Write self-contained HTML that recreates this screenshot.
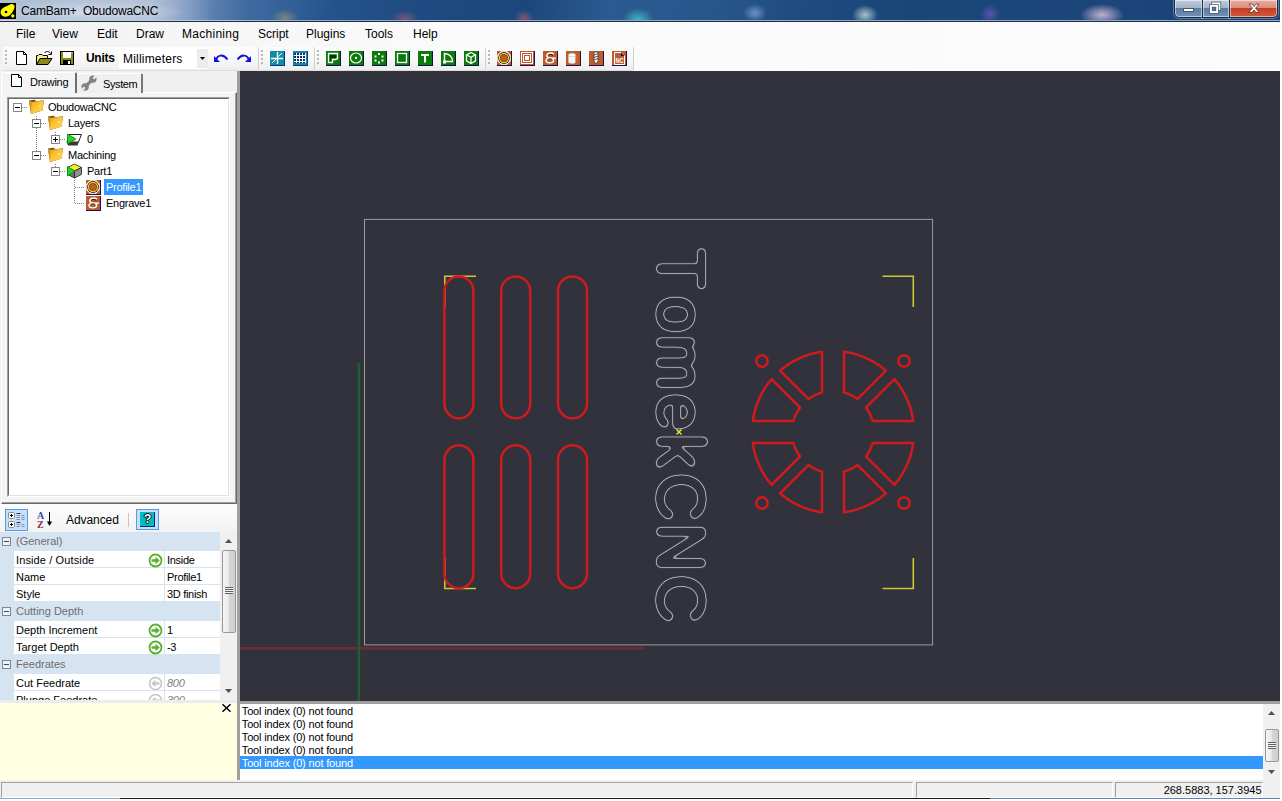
<!DOCTYPE html>
<html>
<head>
<meta charset="utf-8">
<title>CamBam+ ObudowaCNC</title>
<style>
html,body{margin:0;padding:0;background:#fff;}
body{width:1282px;height:801px;overflow:hidden;position:relative;font-family:"Liberation Sans",sans-serif;font-size:12px;color:#000;}
.abs{position:absolute;}
svg{position:absolute;overflow:visible;}
#win{position:absolute;left:0;top:0;width:1280px;height:799px;background:#f0f0f0;overflow:hidden;}
/* title bar */
#title{position:absolute;left:0;top:0;width:1280px;height:22px;overflow:hidden;
background:
 radial-gradient(ellipse 95px 12px at 92px 12px,rgba(212,221,234,.9),rgba(200,211,228,.5) 60%,rgba(190,203,222,0) 100%),
 linear-gradient(90deg,rgba(178,192,213,.95) 0,rgba(184,198,218,.95) 150px,rgba(160,180,210,.7) 185px,rgba(120,150,195,.3) 215px,rgba(100,135,185,0) 245px),
 radial-gradient(ellipse 14px 9px at 285px 18px,rgba(150,150,110,.7),rgba(150,150,110,0)),
 radial-gradient(ellipse 14px 9px at 405px 19px,rgba(160,90,110,.7),rgba(160,90,110,0)),
 radial-gradient(ellipse 10px 8px at 524px 18px,rgba(170,90,110,.7),rgba(170,90,110,0)),
 radial-gradient(ellipse 16px 12px at 638px 20px,rgba(70,190,200,.9),rgba(70,190,200,0)),
 radial-gradient(ellipse 12px 9px at 755px 13px,rgba(130,160,220,.8),rgba(130,160,220,0)),
 radial-gradient(ellipse 13px 10px at 865px 15px,rgba(185,212,212,.85),rgba(170,200,200,.5) 50%,rgba(170,200,200,0)),
 radial-gradient(ellipse 10px 10px at 990px 14px,rgba(100,85,180,.85),rgba(90,80,170,0)),
 radial-gradient(ellipse 22px 11px at 1102px 15px,rgba(205,190,215,.9),rgba(190,170,205,.55) 50%,rgba(190,170,200,0)),
 linear-gradient(100deg,#7d9bbf 0px,#5d83b0 150px,#3a679d 260px,#24538b 330px,#1d4a80 420px,#1c477b 520px,#2a5a90 600px,#28578c 700px,#1e4a7e 800px,#1a4577 900px,#1b4679 1000px,#1c457a 1100px,#1b4376 1200px,#1d4679 1276px,#4f7aac 1278px,#5b86b6 1280px);}
#title:after{content:"";position:absolute;left:0;right:0;top:20px;height:1px;background:linear-gradient(90deg,#ccd6e4 0,#b9c8dc 200px,#8fa9c8 300px,#8fa9c8 100%);}
#title:before{content:"";position:absolute;left:0;right:0;top:21px;height:1px;background:#222e44;z-index:2;}
#title .ttext{position:absolute;left:21px;top:4px;font-size:12px;white-space:pre;color:#000;letter-spacing:-0.2px;}
.cap{position:absolute;top:0;height:18px;box-sizing:border-box;border:1px solid #1c2c48;border-top:none;box-shadow:inset 0 0 0 1px rgba(255,255,255,.5),0 0 0 1px rgba(190,208,230,.4);}
#menubar{position:absolute;left:0;top:22px;width:1280px;height:24px;background:linear-gradient(90deg,#f1f1f1 0,#f6f6f6 200px,#fafafa 450px,#fcfcfc 100%);}
#menubar span{position:absolute;top:5px;font-size:12px;white-space:pre;}
#toolbar{position:absolute;left:0;top:46px;width:1280px;height:25px;background:linear-gradient(90deg,#f1f1f1 0,#f6f6f6 200px,#fafafa 450px,#fcfcfc 100%);}
.strip{position:absolute;top:1px;height:24px;background:linear-gradient(180deg,#fcfcfc,#f8f8f8 50%,#eeeeee);border-radius:2px 2px 2px 2px;border-right:1px solid #d0d0d0;border-bottom:1px solid #dcdcdc;box-sizing:border-box;}
.grip{position:absolute;top:4px;width:2px;height:14px;background:repeating-linear-gradient(180deg,#b8b8b8 0,#b8b8b8 2px,transparent 2px,transparent 4px);}
.gi{position:absolute;top:5px;width:15px;height:15px;box-sizing:border-box;border-right:1px solid #101050;border-bottom:1px solid #101050;background:#0a7a0a;}
.bi{position:absolute;top:5px;width:15px;height:15px;box-sizing:border-box;border-right:1px solid #201050;border-bottom:1px solid #201050;background:#bc5c2e;}
.gi svg,.bi svg{left:0;top:0;}
#canvas{position:absolute;left:240px;top:71px;width:1040px;height:630px;background:#32323c;}

.f11{font-size:11px;white-space:pre;}
.f12{font-size:12px;}
.tl{position:absolute;font-size:11px;white-space:pre;line-height:14px;letter-spacing:-0.25px;}
.dh{position:absolute;height:1px;background:repeating-linear-gradient(90deg,#808080 0,#808080 1px,transparent 1px,transparent 2px);}
.dv{position:absolute;width:1px;background:repeating-linear-gradient(180deg,#808080 0,#808080 1px,transparent 1px,transparent 2px);}
.ex{position:absolute;width:9px;height:9px;box-sizing:border-box;border:1px solid #848484;background:#fff;}
.ex i{position:absolute;left:1px;top:3px;width:5px;height:1px;background:#000;}
.ex b{position:absolute;left:3px;top:1px;width:1px;height:5px;background:#000;}
.ex.g{background:#eef3fa;border-color:#7b8794;}
.ex.g i{background:#404850;}
.cat{position:absolute;left:16px;width:204px;height:19px;line-height:18px;font-size:11px;color:#6d6d6d;white-space:pre;letter-spacing:0;}
.row{position:absolute;left:14px;width:206px;height:16px;background:#fff;font-size:11px;line-height:16px;white-space:pre;}
.row .l{position:absolute;left:2px;top:1px;}
.row .v{position:absolute;left:150px;top:0;width:56px;height:16px;line-height:18px;border-left:1px solid #d6e4f2;padding-left:2px;box-sizing:border-box;letter-spacing:-0.3px;}
.row .v.d{color:#808080;font-style:italic;}
.lg{position:absolute;left:241.8px;font-size:11px;line-height:14px;height:13px;white-space:pre;letter-spacing:-0.16px;}
.sp{position:absolute;top:782px;height:16px;box-sizing:border-box;border:1px solid;border-color:#a0a0a0 #fff #fff #a0a0a0;}
</style>
</head>
<body>
<div id="win">
  <div id="title">
    <svg style="left:0;top:3px" width="17" height="17" viewBox="0 0 17 17"><rect width="16" height="16" fill="#000"/><path d="M0.600 9.500 C0.500 6.500 3.500 4.300 6 3.600 L10.500 1.300 C12.500 0.500 14.800 1.600 14.600 4 C14.400 6.500 12.500 9 11 11 C9.500 13 6.500 14.300 4 13.600 C2 13 0.700 11.500 0.600 9.500 Z" fill="#fafa00"/><circle cx="6" cy="9" r="1.350" fill="#000"/><path d="M12.800 10.800 L14.900 12.900 L12.800 15 L10.700 12.900 Z" fill="#fafa00"/></svg>
    <div class="ttext">CamBam+  ObudowaCNC</div>
    <div class="cap" style="left:1174px;width:29px;border-radius:0 0 0 5px;background:linear-gradient(180deg,#c0ccdc 0,#a2b5cc 46%,#5c7ca4 50%,#7090b8 100%);"></div>
    <div class="cap" style="left:1202px;width:28px;background:linear-gradient(180deg,#c0ccdc 0,#a2b5cc 46%,#5c7ca4 50%,#7090b8 100%);"></div>
    <div class="cap" style="left:1229px;width:49px;border-radius:0 0 5px 0;background:linear-gradient(180deg,#e9aea2 0,#dd8c7c 45%,#c63f25 50%,#cf5a3a 100%);"></div>
    <svg style="left:1174px;top:0" width="104" height="18" viewBox="0 0 104 18">
      <rect x="9.5" y="8.5" width="10" height="3" fill="#fff" stroke="#4a5668" stroke-width="1"/>
      <rect x="39" y="3.300" width="6.500" height="6" fill="none" stroke="#fff" stroke-width="2"/><rect x="37.700" y="2" width="9.100" height="8.600" fill="none" stroke="#4a5668" stroke-width="0.7"/>
      <rect x="36.800" y="5.700" width="6.500" height="6.400" fill="#6d87a8" stroke="#fff" stroke-width="2.100"/><rect x="35.500" y="4.400" width="9.100" height="9" fill="none" stroke="#4a5668" stroke-width="0.7"/><rect x="38.400" y="7.300" width="3.300" height="3.200" fill="#5b7596" stroke="#4a5668" stroke-width=".6"/>
      <path d="M75 4 L78 4 L80 6.500 L82 4 L85 4 L81.600 8.200 L85.200 12.500 L82 12.500 L80 10 L78 12.500 L74.800 12.500 L78.400 8.200 Z" fill="#fff" stroke="#5a3030" stroke-width=".8" stroke-linejoin="round"/>
    </svg>
  </div>
  <div id="menubar">
    <span style="left:16px">File</span>
    <span style="left:52px">View</span>
    <span style="left:97px">Edit</span>
    <span style="left:136px">Draw</span>
    <span style="left:182px;letter-spacing:0.28px">Machining</span>
    <span style="left:258px">Script</span>
    <span style="left:306px">Plugins</span>
    <span style="left:365px">Tools</span>
    <span style="left:413px">Help</span>
  </div>
  <div id="toolbar">
    <div class="strip" style="left:3px;width:256px;"></div>
    <div class="strip" style="left:259px;width:56px;"></div>
    <div class="strip" style="left:315px;width:171px;"></div>
    <div class="strip" style="left:486px;width:148px;"></div>
    <div class="grip" style="left:5px"></div>
    <div class="grip" style="left:261px"></div>
    <div class="grip" style="left:317px"></div>
    <div class="grip" style="left:488px"></div>
    <!-- new / open / save -->
    <svg style="left:16px;top:5px" width="12" height="14" viewBox="0 0 12 14"><path d="M0.500 0.500 H7.500 L10.500 3.500 V13.500 H0.500 Z" fill="#fff" stroke="#000"/><path d="M7.500 0.500 V3.500 H10.500" fill="none" stroke="#000"/></svg>
    <svg style="left:36px;top:4px" width="17" height="16" viewBox="0 0 17 16"><path d="M0.500 14.500 V5.500 H2 L3 4.500 H6 L7 5.500 H11.500 V8.500" fill="#f2ee7a" stroke="#000"/><path d="M0.500 14.500 L4 8.500 H16 L12 14.500 Z" fill="#8a8a18" stroke="#000"/><path d="M8.500 3 C10 1 13 1 14.500 3.500" fill="none" stroke="#000"/><path d="M15.500 1.500 V4.500 H12.500" fill="none" stroke="#000"/></svg>
    <svg style="left:60px;top:5px" width="15" height="15" viewBox="0 0 15 15"><rect x="0.500" y="0.500" width="13" height="13" fill="#8a8a18" stroke="#000"/><rect x="3" y="1" width="8" height="6" fill="#fff"/><rect x="3" y="9" width="8" height="4.500" fill="#000"/><rect x="8" y="10" width="2" height="3" fill="#fff"/><rect x="11.500" y="1.500" width="1" height="1" fill="#fff"/></svg>
    <div class="abs" style="left:86px;top:5px;font-weight:bold;font-size:12px;letter-spacing:-0.3px;">Units</div>
    <div class="abs" style="left:119px;top:2px;width:89px;height:21px;background:#fff;"></div>
    <div class="abs" style="left:197px;top:3px;width:11px;height:19px;background:#ececec;"></div>
    <div class="abs" style="left:123px;top:6px;font-size:12px;letter-spacing:0.2px;">Millimeters</div>
    <svg style="left:200px;top:11px" width="5" height="3" viewBox="0 0 5 3"><path d="M0 0 H5 L2.500 3 Z" fill="#000"/></svg>
    <!-- undo / redo -->
    <svg style="left:213px;top:6px" width="16" height="12" viewBox="0 0 16 12"><path d="M3 8 C4.500 3 10 1.500 14.500 7.500" fill="none" stroke="#1414d8" stroke-width="2"/><path d="M1 4 V10 H7 Z" fill="#1414d8"/></svg>
    <svg style="left:236px;top:6px" width="16" height="12" viewBox="0 0 16 12"><path d="M13 8 C11.500 3 6 1.500 1.500 7.500" fill="none" stroke="#1414d8" stroke-width="2"/><path d="M15 4 V10 H9 Z" fill="#1414d8"/></svg>
    <!-- view icons -->
    <div class="gi" style="left:270px;background:#108ca6;border-color:#0c3a8a;"><svg width="14" height="14" viewBox="0 0 14 14"><path d="M7.500 1 V13 M1 7.500 H13" stroke="#fff" stroke-width="1.400"/><path d="M2 12 L6 8 M8.500 5.500 L12 2" stroke="#fff" stroke-width="1"/></svg></div>
    <div class="gi" style="left:293px;background:#108ca6;border-color:#0c3a8a;"><svg width="14" height="14" viewBox="0 0 14 14"><rect x="1" y="2" width="12" height="10" fill="#08306e"/><path d="M1 4.500 H13 M1 7.500 H13 M1 10.500 H13 M3.500 2 V12 M6.500 2 V12 M9.500 2 V12 M12.500 2 V12" stroke="#fff" stroke-width="1"/></svg></div>
    <!-- green draw icons -->
    <div class="gi" style="left:326px"><svg width="14" height="14" viewBox="0 0 14 14"><path d="M2.500 2.500 H11.500 V7.500 L9.500 8.500 H6.500 V11.500 H2.500 Z" fill="none" stroke="#fff" stroke-width="1.300"/><path d="M4 4 H10 V7 H5 V10 H4 Z" fill="#000" opacity=".55"/></svg></div>
    <div class="gi" style="left:349px"><svg width="14" height="14" viewBox="0 0 14 14"><ellipse cx="7" cy="7" rx="5.500" ry="5" fill="none" stroke="#fff" stroke-width="1.200"/><circle cx="7" cy="7" r="1.200" fill="#fff"/></svg></div>
    <div class="gi" style="left:372px"><svg width="14" height="14" viewBox="0 0 14 14"><g fill="#fff"><rect x="6" y="2" width="2" height="2"/><rect x="2.500" y="4.500" width="2" height="2"/><rect x="9.500" y="4.500" width="2" height="2"/><rect x="2.500" y="8.500" width="2" height="2"/><rect x="9.500" y="8.500" width="2" height="2"/><rect x="6" y="10.500" width="2" height="2"/></g></svg></div>
    <div class="gi" style="left:395px"><svg width="14" height="14" viewBox="0 0 14 14"><rect x="2.500" y="2.500" width="9" height="9" fill="none" stroke="#fff" stroke-width="1.300"/></svg></div>
    <div class="gi" style="left:418px"><svg width="14" height="14" viewBox="0 0 14 14"><path d="M3 3 H11 V5 H8 V11.500 H6 V5 H3 Z" fill="#fff"/></svg></div>
    <div class="gi" style="left:441px"><svg width="14" height="14" viewBox="0 0 14 14"><path d="M3.500 10.500 V2.500 C8 2.500 11.500 6 11.500 10.500 Z" fill="none" stroke="#fff" stroke-width="1.400"/><rect x="2" y="9.500" width="3" height="3" fill="#fff"/></svg></div>
    <div class="gi" style="left:464px"><svg width="14" height="14" viewBox="0 0 14 14"><path d="M7 1.500 L11.500 3.800 V9.800 L7 12.500 L2.500 9.800 V3.800 Z M2.500 3.800 L7 6.300 L11.500 3.800 M7 6.300 V12.500" fill="none" stroke="#fff" stroke-width="1.300"/></svg></div>
    <!-- brown machining icons -->
    <div class="bi" style="left:497px"><svg width="14" height="14" viewBox="0 0 14 14"><path d="M4 0.300 H10 L13.700 4 V10 L10 13.700 H4 L0.300 10 V4 Z" fill="#fff"/><circle cx="7" cy="7" r="5.900" fill="#181008"/><circle cx="7" cy="7" r="4.500" fill="#bc5c2e" stroke="#f8d810" stroke-width="1.400"/><circle cx="7" cy="7" r="3.700" fill="none" stroke="#302008" stroke-width=".5"/></svg></div>
    <div class="bi" style="left:520px"><svg width="14" height="14" viewBox="0 0 14 14"><rect x="1" y="1" width="12" height="12" fill="#fff"/><rect x="2.500" y="2.500" width="9" height="9" fill="none" stroke="#bc5c2e" stroke-width="1"/><rect x="4.500" y="4.500" width="5" height="5" fill="none" stroke="#bc5c2e" stroke-width="1"/><rect x="6" y="6" width="2" height="2" fill="#fff"/></svg></div>
    <div class="bi" style="left:543px"><svg width="14" height="14" viewBox="0 0 14 14"><path d="M10.800 3.200 C9.500 1.800 5.500 1.600 4.200 3.400 C3 5.200 4.500 6.800 7 7.200 H12.800" fill="none" stroke="#fff" stroke-width="1.500"/><path d="M10.200 4.300 C9 3.300 6.300 3.200 5.500 4.300" fill="none" stroke="#000" stroke-width=".8"/><ellipse cx="6.800" cy="9.600" rx="3.800" ry="2.300" fill="none" stroke="#fff" stroke-width="1.400"/><path d="M4.500 8.400 C5.500 7.700 8 7.700 9.200 8.400" fill="none" stroke="#000" stroke-width=".8"/></svg></div>
    <div class="bi" style="left:566px"><svg width="14" height="14" viewBox="0 0 14 14"><path d="M2.500 4 V11 C2.500 13 9.500 13 9.500 11 V4" fill="#f4f4f4" stroke="#c8c8c8" stroke-width=".6"/><ellipse cx="6" cy="4" rx="3.500" ry="1.800" fill="#fff" stroke="#c0c0c0" stroke-width=".6"/><path d="M9.500 5 V11.500 L12 10 V4 Z" fill="#e06030" opacity=".7"/></svg></div>
    <div class="bi" style="left:589px"><svg width="14" height="14" viewBox="0 0 14 14"><path d="M5 1 H9 V10 L7 13 L5 10 Z" fill="#fff" stroke="#303030" stroke-width=".7"/><path d="M5 4 L9 2.500 M5 6.500 L9 5 M5 9 L9 7.500" stroke="#303030" stroke-width=".8"/></svg></div>
    <div class="bi" style="left:612px"><svg width="14" height="14" viewBox="0 0 14 14"><path d="M2.500 1.500 H9 L12.500 5 V13.500 H2.500 Z" fill="none" stroke="#fff" stroke-width="1"/><path d="M9 1.500 L12.500 5 H9 Z" fill="#201040"/><text x="3.600" y="11.500" font-family="Liberation Sans,sans-serif" font-size="6.500" font-weight="bold" fill="#fff" textLength="8" lengthAdjust="spacingAndGlyphs">NC</text></svg></div>
  </div>
  <div id="canvas"></div>
<svg width="0" height="0" style="left:0;top:0"><linearGradient id="fg" x1="0" y1="0" x2="1" y2="1"><stop offset="0" stop-color="#f0a414"/><stop offset=".55" stop-color="#fcc83a"/><stop offset="1" stop-color="#ffd658"/></linearGradient></svg>
  <svg id="cv" style="left:0;top:0" width="1280" height="701" viewBox="0 0 1280 701">
    <g fill="none" stroke="#9c9ca8" stroke-width="1">
      <rect x="364.500" y="219.400" width="568.100" height="425.500"/>
    </g>
    <path d="M240 648.200 H643.800" stroke="#702c36" stroke-width="2.600" fill="none"/>
    <path d="M358.900 363 V701" stroke="#1f602b" stroke-width="2.400" fill="none"/>
    <g fill="none" stroke="#c8c834" stroke-width="1.600">
      <path d="M476 276.200 H444.800 V307"/>
      <path d="M882.500 276.200 H913.300 V307"/>
      <path d="M476 588.500 H444.800 V558"/>
      <path d="M882.500 588.500 H913.300 V558"/>
    </g>
    <g fill="none" stroke="#d01a1e" stroke-width="2.500" stroke-linejoin="round">
      <rect x="444.4" y="276.4" width="29" height="141.9" rx="14.5" ry="14.5"/><rect x="444.4" y="445.3" width="29" height="142.9" rx="14.5" ry="14.5"/><rect x="501.2" y="276.4" width="29" height="141.9" rx="14.5" ry="14.5"/><rect x="501.2" y="445.3" width="29" height="142.9" rx="14.5" ry="14.5"/><rect x="558.0" y="276.4" width="29" height="141.9" rx="14.5" ry="14.5"/><rect x="558.0" y="445.3" width="29" height="142.9" rx="14.5" ry="14.5"/>
      <path d="M844.0 351.8 L847.3 352.3 L850.5 352.9 L853.8 353.7 L857.0 354.6 L860.1 355.7 L863.2 356.9 L866.3 358.2 L869.3 359.6 L872.3 361.1 L875.1 362.8 L877.9 364.6 L880.7 366.5 L883.3 368.5 L885.9 370.6 L857.4 399.1 L856.6 398.4 L855.7 397.8 L854.8 397.3 L853.9 396.7 L852.9 396.2 L852.0 395.7 L851.0 395.2 L850.0 394.7 L849.1 394.3 L848.1 393.9 L847.1 393.5 L846.1 393.1 L845.0 392.8 L844.0 392.5 Z"/>
<path d="M913.2 421.0 L912.7 417.7 L912.1 414.5 L911.3 411.2 L910.4 408.0 L909.3 404.9 L908.1 401.8 L906.8 398.7 L905.4 395.7 L903.9 392.7 L902.2 389.9 L900.4 387.1 L898.5 384.3 L896.5 381.7 L894.4 379.1 L865.9 407.6 L866.6 408.4 L867.2 409.3 L867.7 410.2 L868.3 411.1 L868.8 412.1 L869.3 413.0 L869.8 414.0 L870.3 415.0 L870.7 415.9 L871.1 416.9 L871.5 417.9 L871.9 418.9 L872.2 420.0 L872.5 421.0 Z"/>
<path d="M844.0 512.2 L847.3 511.7 L850.5 511.1 L853.8 510.3 L857.0 509.4 L860.1 508.3 L863.2 507.1 L866.3 505.8 L869.3 504.4 L872.3 502.9 L875.1 501.2 L877.9 499.4 L880.7 497.5 L883.3 495.5 L885.9 493.4 L857.4 464.9 L856.6 465.6 L855.7 466.2 L854.8 466.7 L853.9 467.3 L852.9 467.8 L852.0 468.3 L851.0 468.8 L850.0 469.3 L849.1 469.7 L848.1 470.1 L847.1 470.5 L846.1 470.9 L845.0 471.2 L844.0 471.5 Z"/>
<path d="M913.2 443.0 L912.7 446.3 L912.1 449.5 L911.3 452.8 L910.4 456.0 L909.3 459.1 L908.1 462.2 L906.8 465.3 L905.4 468.3 L903.9 471.3 L902.2 474.1 L900.4 476.9 L898.5 479.7 L896.5 482.3 L894.4 484.9 L865.9 456.4 L866.6 455.6 L867.2 454.7 L867.7 453.8 L868.3 452.9 L868.8 451.9 L869.3 451.0 L869.8 450.0 L870.3 449.0 L870.7 448.1 L871.1 447.1 L871.5 446.1 L871.9 445.1 L872.2 444.0 L872.5 443.0 Z"/>
<path d="M822.0 351.8 L818.7 352.3 L815.5 352.9 L812.2 353.7 L809.0 354.6 L805.9 355.7 L802.8 356.9 L799.7 358.2 L796.7 359.6 L793.7 361.1 L790.9 362.8 L788.1 364.6 L785.3 366.5 L782.7 368.5 L780.1 370.6 L808.6 399.1 L809.4 398.4 L810.3 397.8 L811.2 397.3 L812.1 396.7 L813.1 396.2 L814.0 395.7 L815.0 395.2 L816.0 394.7 L816.9 394.3 L817.9 393.9 L818.9 393.5 L819.9 393.1 L821.0 392.8 L822.0 392.5 Z"/>
<path d="M752.8 421.0 L753.3 417.7 L753.9 414.5 L754.7 411.2 L755.6 408.0 L756.7 404.9 L757.9 401.8 L759.2 398.7 L760.6 395.7 L762.1 392.7 L763.8 389.9 L765.6 387.1 L767.5 384.3 L769.5 381.7 L771.6 379.1 L800.1 407.6 L799.4 408.4 L798.8 409.3 L798.3 410.2 L797.7 411.1 L797.2 412.1 L796.7 413.0 L796.2 414.0 L795.7 415.0 L795.3 415.9 L794.9 416.9 L794.5 417.9 L794.1 418.9 L793.8 420.0 L793.5 421.0 Z"/>
<path d="M822.0 512.2 L818.7 511.7 L815.5 511.1 L812.2 510.3 L809.0 509.4 L805.9 508.3 L802.8 507.1 L799.7 505.8 L796.7 504.4 L793.7 502.9 L790.9 501.2 L788.1 499.4 L785.3 497.5 L782.7 495.5 L780.1 493.4 L808.6 464.9 L809.4 465.6 L810.3 466.2 L811.2 466.7 L812.1 467.3 L813.1 467.8 L814.0 468.3 L815.0 468.8 L816.0 469.3 L816.9 469.7 L817.9 470.1 L818.9 470.5 L819.9 470.9 L821.0 471.2 L822.0 471.5 Z"/>
<path d="M752.8 443.0 L753.3 446.3 L753.9 449.5 L754.7 452.8 L755.6 456.0 L756.7 459.1 L757.9 462.2 L759.2 465.3 L760.6 468.3 L762.1 471.3 L763.8 474.1 L765.6 476.9 L767.5 479.7 L769.5 482.3 L771.6 484.9 L800.1 456.4 L799.4 455.6 L798.8 454.7 L798.3 453.8 L797.7 452.9 L797.2 451.9 L796.7 451.0 L796.2 450.0 L795.7 449.0 L795.3 448.1 L794.9 447.1 L794.5 446.1 L794.1 445.1 L793.8 444.0 L793.5 443.0 Z"/>
      <circle cx="762" cy="361" r="5.700"/><circle cx="762" cy="503" r="5.700"/><circle cx="904" cy="361" r="5.700"/><circle cx="904" cy="503" r="5.700"/>
    </g>
    <filter id="ol" filterUnits="userSpaceOnUse" x="230" y="-80" width="410" height="100" color-interpolation-filters="sRGB">
      <feGaussianBlur in="SourceAlpha" stdDeviation="2"/>
      <feComponentTransfer result="band"><feFuncA type="table" tableValues="0 0 0.150 1 1 0.150 0 0 0 0 0 0 0 0 0 0"/></feComponentTransfer>
      <feFlood flood-color="#a2a2ae"/>
      <feComposite operator="in" in2="band"/>
    </filter>
    <g font-family="Liberation Sans, sans-serif" font-size="66" transform="translate(658,0) rotate(90)">
      <text x="248.4 296.1 335 393.7 434.2 473.2 523.6 575" y="0" fill="#ffffff" filter="url(#ol)">TomekCNC</text>
    </g>
    <path d="M676.500 429.500 L681.500 434.500 M681.500 429.500 L676.500 434.500" stroke="#f0f020" stroke-width="1.300" fill="none"/>
  </svg>

  <!-- LEFT PANEL -->
  <div id="left" class="abs" style="left:0;top:71px;width:237px;height:630px;background:#f0f0f0;"></div>
  <div class="abs" style="left:237px;top:71px;width:3px;height:709px;background:#a0a0a0;"></div>
  <!-- tab page frame -->
  <div class="abs" style="left:1px;top:92px;width:236px;height:412px;box-sizing:border-box;border-left:1px solid #fff;border-top:1px solid #fff;border-right:1px solid #696969;border-bottom:1px solid #696969;box-shadow:inset -1px -1px 0 #a0a0a0;background:#f4f4f4;"></div>
  <!-- tabs -->
  <div class="abs" style="left:1px;top:72px;width:76px;height:21px;box-sizing:border-box;border-left:1px solid #fff;border-top:1px solid #fff;border-right:2px solid #6e6e6e;background:#f4f4f4;border-radius:2px 2px 0 0;"></div>
  <div class="abs" style="left:77px;top:73px;width:66px;height:20px;box-sizing:border-box;border-top:1px solid #fff;border-right:2px solid #787878;background:#f0f0f0;border-radius:0 2px 0 0;"></div>
  <svg style="left:11px;top:74px" width="12" height="14" viewBox="0 0 12 14"><path d="M0.500 0.500 H7.500 L10.500 3.500 V12.500 H0.500 Z" fill="#fff" stroke="#000"/><path d="M7.500 0.500 V3.500 H10.500" fill="none" stroke="#000"/></svg>
  <div class="abs f11" style="left:30px;top:75.500px;letter-spacing:-0.3px;">Drawing</div>
  <svg style="left:81px;top:75px" width="16" height="16" viewBox="0 0 16 16"><g fill="#828282"><circle cx="11.900" cy="4.100" r="3.700"/><circle cx="4.100" cy="11.900" r="3.700"/></g><path d="M4.100 11.900 L11.900 4.100" stroke="#828282" stroke-width="3.200"/><path d="M12.300 3.700 L16 0 M3.700 12.300 L0 16" stroke="#f0f0f0" stroke-width="2.300"/></svg>
  <div class="abs f11" style="left:103px;top:78px;letter-spacing:-0.4px;">System</div>
  <!-- tree box -->
  <div class="abs" style="left:7px;top:97px;width:223px;height:400px;box-sizing:border-box;border:1px solid;border-color:#a0a0a0 #fff #fff #a0a0a0;background:#fff;"><div style="position:absolute;left:0;top:0;right:0;bottom:0;border:1px solid;border-color:#696969 #e3e3e3 #e3e3e3 #696969;"></div></div>
  <div id="tree">
    <!-- dotted connectors -->
    <div class="dh" style="left:22px;top:107px;width:6px"></div>
    <div class="dv" style="left:36px;top:116px;height:39px"></div>
    <div class="dh" style="left:41px;top:123px;width:6px"></div>
    <div class="dv" style="left:55px;top:132px;height:3px"></div>
    <div class="dh" style="left:60px;top:139px;width:6px"></div>
    <div class="dh" style="left:41px;top:155px;width:6px"></div>
    <div class="dv" style="left:55px;top:164px;height:3px"></div>
    <div class="dh" style="left:60px;top:171px;width:6px"></div>
    <div class="dv" style="left:74px;top:180px;height:24px"></div>
    <div class="dh" style="left:75px;top:187px;width:10px"></div>
    <div class="dh" style="left:75px;top:203px;width:10px"></div>
    <!-- expanders -->
    <div class="ex" style="left:13px;top:103px"><i></i></div>
    <div class="ex" style="left:32px;top:119px"><i></i></div>
    <div class="ex" style="left:51px;top:135px"><i></i><b></b></div>
    <div class="ex" style="left:32px;top:151px"><i></i></div>
    <div class="ex" style="left:51px;top:167px"><i></i></div>
    <!-- icons -->
    <svg class="fold" style="left:28px;top:99px" width="17" height="16" viewBox="0 0 17 16"><path d="M1 1.500 L7 0.800 L8 2.200 L16 1.200 L14.500 11.500 L3 15 Z" fill="#6a5214"/><path d="M1 1.500 L3.500 3 L16 1.500 L14.500 11.500 L3 15 Z" fill="url(#fg)"/><path d="M1 1.500 L3.500 3 L3 15 Z" fill="#d8901a"/><rect x="11" y="6.500" width="1.500" height="1.500" fill="#fff58a"/></svg>
    <svg class="fold" style="left:47px;top:115px" width="17" height="16" viewBox="0 0 17 16"><path d="M1 1.500 L7 0.800 L8 2.200 L16 1.200 L14.500 11.500 L3 15 Z" fill="#6a5214"/><path d="M1 1.500 L3.500 3 L16 1.500 L14.500 11.500 L3 15 Z" fill="url(#fg)"/><path d="M1 1.500 L3.500 3 L3 15 Z" fill="#d8901a"/><rect x="11" y="6.500" width="1.500" height="1.500" fill="#fff58a"/></svg>
    <svg class="fold" style="left:47px;top:147px" width="17" height="16" viewBox="0 0 17 16"><path d="M1 1.500 L7 0.800 L8 2.200 L16 1.200 L14.500 11.500 L3 15 Z" fill="#6a5214"/><path d="M1 1.500 L3.500 3 L16 1.500 L14.500 11.500 L3 15 Z" fill="url(#fg)"/><path d="M1 1.500 L3.500 3 L3 15 Z" fill="#d8901a"/><rect x="11" y="6.500" width="1.500" height="1.500" fill="#fff58a"/></svg>
    <svg style="left:66px;top:131px" width="17" height="16" viewBox="0 0 17 16"><path d="M3 3.500 H15.500 L12.500 11 H1 Z" fill="#fff" stroke="#202020" stroke-width="1"/><path d="M0.500 11 H12.800 L11.500 14.500 H2 Z" fill="#383838"/><path d="M1.500 3 V13 L10 8 Z" fill="#28d028" stroke="#0a8a0a" stroke-width=".8"/></svg>
    <svg style="left:66px;top:163px" width="17" height="16" viewBox="0 0 17 16"><path d="M8.500 1 L15.500 4.500 L8.500 8 L1.500 4.500 Z" fill="#f4f020" stroke="#202020" stroke-width=".8"/><path d="M15.500 4.500 V11.500 L8.500 15 V8 Z" fill="#909090" stroke="#202020" stroke-width=".8"/><path d="M1.500 4.500 V11.500 L8.500 15 V8 Z" fill="#707070" stroke="#202020" stroke-width=".8"/><path d="M1.500 3.500 V13 L9 8.200 Z" fill="#28d028" stroke="#0a8a0a" stroke-width=".8"/></svg>
    <div class="bi" style="left:86px;top:180px;"><svg width="14" height="14" viewBox="0 0 14 14"><path d="M4 0.300 H10 L13.700 4 V10 L10 13.700 H4 L0.300 10 V4 Z" fill="#fff"/><circle cx="7" cy="7" r="5.900" fill="#181008"/><circle cx="7" cy="7" r="4.500" fill="#bc5c2e" stroke="#f8d810" stroke-width="1.400"/><circle cx="7" cy="7" r="3.700" fill="none" stroke="#302008" stroke-width=".5"/></svg></div>
    <div class="bi" style="left:86px;top:196px;"><svg width="14" height="14" viewBox="0 0 14 14"><path d="M10.800 3.200 C9.500 1.800 5.500 1.600 4.200 3.400 C3 5.200 4.500 6.800 7 7.200 H12.800" fill="none" stroke="#fff" stroke-width="1.500"/><path d="M10.200 4.300 C9 3.300 6.300 3.200 5.500 4.300" fill="none" stroke="#000" stroke-width=".8"/><ellipse cx="6.800" cy="9.600" rx="3.800" ry="2.300" fill="none" stroke="#fff" stroke-width="1.400"/><path d="M4.500 8.400 C5.500 7.700 8 7.700 9.200 8.400" fill="none" stroke="#000" stroke-width=".8"/></svg></div>
    <!-- labels -->
    <div class="tl" style="left:48px;top:100px">ObudowaCNC</div>
    <div class="tl" style="left:68px;top:116px">Layers</div>
    <div class="tl" style="left:87px;top:132px">0</div>
    <div class="tl" style="left:68px;top:148px">Machining</div>
    <div class="tl" style="left:87px;top:164px">Part1</div>
    <div class="abs" style="left:104px;top:179px;width:39px;height:16px;background:#3399ff;"></div>
    <div class="tl" style="left:106px;top:180px;color:#fff">Profile1</div>
    <div class="tl" style="left:106px;top:196px">Engrave1</div>
  </div>
  <!-- property toolbar -->
  <div class="abs" style="left:0;top:504px;width:237px;height:28px;background:linear-gradient(180deg,#fcfcfc,#f8f8f9 50%,#f1f2f4);"></div>
  <div class="abs" style="left:5px;top:509px;width:23px;height:22px;box-sizing:border-box;border:1px solid #5a9be0;background:#c6e0fb;"></div>
  <svg style="left:8px;top:512px" width="17" height="16" viewBox="0 0 17 16"><rect x="0.500" y="0.500" width="6" height="6" rx="1.200" fill="#fff" stroke="#8a8a8a"/><rect x="0.500" y="9.500" width="6" height="6" rx="1.200" fill="#fff" stroke="#8a8a8a"/><path d="M2 3.500 H5 M3.500 2 V5 M2 12.500 H5 M3.500 11 V14" stroke="#000" stroke-width="1"/><path d="M8.500 1.500 H12.500 M8.500 10.500 H12.500" stroke="#303030"/><path d="M8.500 3.500 H12 M13.500 3.500 H16.500 M8.500 5.500 H12 M13.500 5.500 H16.500 M8.500 7.500 H12 M13.500 7.500 H16.500 M8.500 12.500 H12 M13.500 12.500 H16.500 M8.500 14.500 H12 M13.500 14.500 H16.500" stroke="#7f92ad" stroke-width="1"/></svg>
  <div class="abs" style="left:37px;top:511px;font-family:'Liberation Serif',serif;font-weight:bold;font-size:10px;line-height:9px;color:#35509a;">A<br><span style="color:#8a2a3a">Z</span></div>
  <svg style="left:46px;top:512px" width="7" height="15" viewBox="0 0 7 15"><path d="M3.500 0 V11" stroke="#000" stroke-width="1"/><path d="M1 9.500 H6 L3.500 14 Z" fill="#000"/></svg>
  <div class="abs" style="left:66px;top:513px;font-size:12px;letter-spacing:-0.08px;">Advanced</div>
  <div class="abs" style="left:128px;top:513px;width:1px;height:14px;background:#c4c6cc;"></div>
  <div class="abs" style="left:136px;top:509px;width:23px;height:21px;box-sizing:border-box;border:1px solid #5a9be0;background:#c6e0fb;"></div>
  <div class="abs" style="left:140px;top:512px;width:15px;height:15px;box-sizing:border-box;background:#00bcc4;border-right:1px solid #0a2a78;border-bottom:1px solid #0a2a78;"></div>
  <div class="abs" style="left:144px;top:512px;font-size:12px;font-weight:bold;color:#fff;text-shadow:1px 0 #000,-1px 0 #000,0 1px #000,0 -1px #000;">?</div>
  <!-- PROPERTY GRID -->
  <div id="grid" class="abs" style="left:0;top:532px;width:237px;height:168px;overflow:hidden;background:#f0f0f0;">
    <div class="abs" style="left:0;top:0;width:220px;height:169px;background:#d6e4f2;"></div>
    <!-- rows: label cell + value cell -->
    <div class="cat" style="top:0">(General)</div>
    <div class="row" style="top:19px"><span class="l" style="letter-spacing:0.12px">Inside / Outside</span><span class="v">Inside</span></div>
    <div class="row" style="top:36px"><span class="l">Name</span><span class="v">Profile1</span></div>
    <div class="row" style="top:53px"><span class="l">Style</span><span class="v">3D finish</span></div>
    <div class="cat" style="top:70px">Cutting Depth</div>
    <div class="row" style="top:89px"><span class="l">Depth Increment</span><span class="v">1</span></div>
    <div class="row" style="top:106px"><span class="l">Target Depth</span><span class="v">-3</span></div>
    <div class="cat" style="top:123px">Feedrates</div>
    <div class="row" style="top:142px"><span class="l">Cut Feedrate</span><span class="v d">800</span></div>
    <div class="row" style="top:159px"><span class="l">Plunge Feedrate</span><span class="v d">300</span></div>
    <!-- expanders -->
    <div class="ex g" style="left:2px;top:5px"><i></i></div>
    <div class="ex g" style="left:2px;top:75px"><i></i></div>
    <div class="ex g" style="left:2px;top:128px"><i></i></div>
    <!-- arrows -->
    <svg style="left:148px;top:21px" width="15" height="15" viewBox="0 0 15 15"><circle cx="7.500" cy="7.500" r="6" fill="#fff" stroke="#5bb030" stroke-width="1.800"/><path d="M3.500 6.300 H7.500 V3.800 L11.800 7.500 L7.500 11.200 V8.700 H3.500 Z" fill="#5bb030"/></svg>
    <svg style="left:148px;top:91px" width="15" height="15" viewBox="0 0 15 15"><circle cx="7.500" cy="7.500" r="6" fill="#fff" stroke="#5bb030" stroke-width="1.800"/><path d="M3.500 6.300 H7.500 V3.800 L11.800 7.500 L7.500 11.200 V8.700 H3.500 Z" fill="#5bb030"/></svg>
    <svg style="left:148px;top:108px" width="15" height="15" viewBox="0 0 15 15"><circle cx="7.500" cy="7.500" r="6" fill="#fff" stroke="#5bb030" stroke-width="1.800"/><path d="M3.500 6.300 H7.500 V3.800 L11.800 7.500 L7.500 11.200 V8.700 H3.500 Z" fill="#5bb030"/></svg>
    <svg style="left:148px;top:144px" width="15" height="15" viewBox="0 0 15 15"><circle cx="7.500" cy="7.500" r="6" fill="#fff" stroke="#c4c4c4" stroke-width="1.600"/><path d="M11.500 6.300 H7.500 V3.800 L3.200 7.500 L7.500 11.200 V8.700 H11.500 Z" fill="#c8c8c8"/></svg>
    <svg style="left:148px;top:161px" width="15" height="15" viewBox="0 0 15 15"><circle cx="7.500" cy="7.500" r="6" fill="#fff" stroke="#c4c4c4" stroke-width="1.600"/><path d="M11.500 6.300 H7.500 V3.800 L3.200 7.500 L7.500 11.200 V8.700 H11.500 Z" fill="#c8c8c8"/></svg>
    <!-- scrollbar -->
    <div class="abs" style="left:220px;top:0;width:17px;height:169px;background:#f0f0f0;"></div>
    <svg style="left:225px;top:7px" width="7" height="4" viewBox="0 0 7 4"><path d="M0 4 L3.500 0 L7 4 Z" fill="#505050"/></svg>
    <svg style="left:225px;top:157px" width="7" height="4" viewBox="0 0 7 4"><path d="M0 0 L3.500 4 L7 0 Z" fill="#505050"/></svg>
    <div class="abs" style="left:222px;top:18px;width:14px;height:83px;box-sizing:border-box;border:1px solid #979797;border-radius:2px;background:linear-gradient(90deg,#f6f6f6 0,#eaeaea 45%,#d6d6d6 50%,#cfcfcf 100%);"></div>
    <div class="abs" style="left:225px;top:55px;width:8px;height:7px;background:repeating-linear-gradient(180deg,#606060 0,#606060 1px,#f4f4f4 1px,#f4f4f4 2px);"></div>
  </div>


  <!-- BOTTOM -->
  <div class="abs" style="left:0;top:700px;width:237px;height:3px;background:#ececec;"></div>
  <div class="abs" style="left:0;top:703px;width:237px;height:77px;background:#ffffe1;"></div>
  <div class="abs" style="left:221px;top:703px;width:11px;height:10px;background:#fdfdf6;"></div>
  <svg style="left:222px;top:704px" width="9" height="8" viewBox="0 0 9 8"><path d="M0.500 0.300 L8.500 7.700 M8.500 0.300 L0.500 7.700" stroke="#000" stroke-width="1.500"/></svg>
  <div class="abs" style="left:240px;top:701px;width:1040px;height:3px;background:#a0a0a0;"></div>
  <div class="abs" style="left:240px;top:704px;width:1040px;height:76px;background:#fff;"></div>
  <div class="abs" style="left:240px;top:756px;width:1023px;height:13px;background:#3399ff;"></div>
  <div class="lg" style="top:704px">Tool index (0) not found</div>
  <div class="lg" style="top:717px">Tool index (0) not found</div>
  <div class="lg" style="top:730px">Tool index (0) not found</div>
  <div class="lg" style="top:743px">Tool index (0) not found</div>
  <div class="lg" style="top:756px;color:#fff">Tool index (0) not found</div>
  <!-- log scrollbar -->
  <div class="abs" style="left:1263px;top:704px;width:17px;height:76px;background:#f0f0f0;"></div>
  <svg style="left:1268px;top:711px" width="7" height="4" viewBox="0 0 7 4"><path d="M0 4 L3.500 0 L7 4 Z" fill="#505050"/></svg>
  <svg style="left:1268px;top:770px" width="7" height="4" viewBox="0 0 7 4"><path d="M0 0 L3.500 4 L7 0 Z" fill="#505050"/></svg>
  <div class="abs" style="left:1265px;top:729px;width:14px;height:33px;box-sizing:border-box;border:1px solid #979797;border-radius:2px;background:linear-gradient(90deg,#f6f6f6 0,#eaeaea 45%,#d6d6d6 50%,#cfcfcf 100%);"></div>
  <div class="abs" style="left:1268px;top:742px;width:8px;height:7px;background:repeating-linear-gradient(180deg,#606060 0,#606060 1px,#f4f4f4 1px,#f4f4f4 2px);"></div>
  <!-- status bar -->
  <div class="abs" style="left:0;top:780px;width:1280px;height:18px;background:#f0f0f0;"></div>
  <div class="sp" style="left:1px;width:912px;"></div>
  <div class="sp" style="left:916px;width:197px;"></div>
  <div class="sp" style="left:1115px;width:148px;"></div>
  <div class="abs f11" style="left:1115px;top:784px;width:146.500px;text-align:right;white-space:pre;">268.5883, 157.3945</div>
  <div class="abs" style="left:0;top:798px;width:1280px;height:1px;background:linear-gradient(90deg,#8aa6c6 0,#8aa6c6 120px,#1a1a1a 120px,#1a1a1a 990px,#5f86b4 990px,#5f86b4 1280px);"></div>

</div>
</body>
</html>
